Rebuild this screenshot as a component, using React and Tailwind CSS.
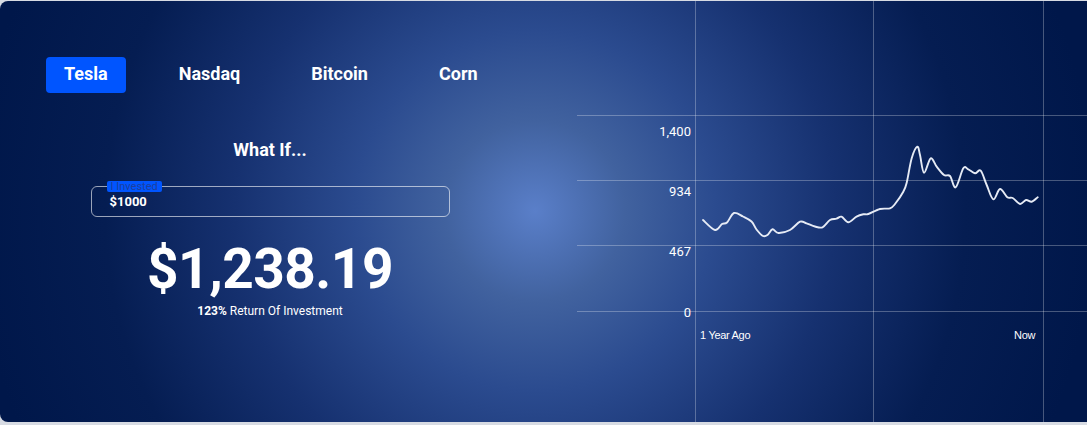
import React from "react";

const PTS = [
  [703, 220], [715, 230], [722, 224], [727, 222.5], [734, 213], [743, 216.5], [751.5, 221.5],
  [756.5, 229.5], [763, 236], [767.5, 235], [772.5, 229.3], [778.5, 233], [790, 230],
  [800, 221.7], [806.5, 223.3], [815, 226.5], [822.5, 227.3], [830, 220], [836.5, 218.7],
  [841.5, 216.7], [848.3, 222.3], [856.5, 216.7], [863.3, 214.3], [868.3, 214], [880, 209],
  [890, 208.3], [895, 204], [903.3, 191.7], [906.7, 182.7], [911.7, 158.3], [917.3, 146.7],
  [920, 155], [924, 172.7], [930.7, 158.3], [936.7, 166.7], [944, 175], [950, 176],
  [955.7, 187.3], [963.3, 168.3], [968.3, 169.3], [975, 173.3], [980.7, 170.7], [986.7, 185],
  [993.3, 199.3], [1000, 189], [1007.3, 197.3], [1012.7, 198], [1020, 204], [1026, 200],
  [1031.7, 201.7], [1037.7, 197.3],
];

function smoothPath(pts) {
  let d = `M ${pts[0][0]} ${pts[0][1]}`;
  for (let i = 0; i < pts.length - 1; i++) {
    const p0 = pts[i - 1] || pts[i];
    const p1 = pts[i];
    const p2 = pts[i + 1];
    const p3 = pts[i + 2] || p2;
    const t = 6;
    const c1x = p1[0] + (p2[0] - p0[0]) / t;
    const c1y = p1[1] + (p2[1] - p0[1]) / t;
    const c2x = p2[0] - (p3[0] - p1[0]) / t;
    const c2y = p2[1] - (p3[1] - p1[1]) / t;
    d += ` C ${c1x.toFixed(2)} ${c1y.toFixed(2)}, ${c2x.toFixed(2)} ${c2y.toFixed(2)}, ${p2[0]} ${p2[1]}`;
  }
  return d;
}

const tabs = ["Tesla", "Nasdaq", "Bitcoin", "Corn"];

export default function App() {
  const d = smoothPath(PTS);
  return (
    <div
      className="w-full h-[425px] bg-[#d7dbe3] pt-px overflow-hidden"
      style={{ fontFamily: "Roboto, 'Liberation Sans', Arial, sans-serif" }}
    >
      <div className="h-[421px] w-full rounded-l-lg overflow-hidden flex bg-[radial-gradient(circle_at_535px_210px,#5a7fc9_0%,#41629f_90px,#2b4b8f_180px,#163170_300px,#051d52_430px,#00174a_560px)] text-white">
        {/* Left column */}
        <div className="w-[577px] shrink-0 flex flex-col">
          <div className="flex gap-[35px] pl-[46px] pt-[56px]">
            {tabs.map((t, i) => (
              <button
                key={t}
                className={
                  "h-9 px-[18px] pb-[3px] rounded-[4px] text-[18px] font-bold leading-none text-white " +
                  (i === 0 ? "bg-[#0055ff]" : "bg-transparent")
                }
              >
                {t}
              </button>
            ))}
          </div>
          <div className="w-[540px] flex flex-col items-center">
            <div className="mt-[46px] text-[18px] leading-[22px] font-bold">What If...</div>
            <div className="relative mt-[25px] w-[359px] h-[31px] border border-white/60 rounded-md">
              <span className="absolute left-[15px] -top-[6px] h-[11px] px-[4px] bg-[#0055ff] rounded-[2px] text-[11px] leading-[11px] text-[#1d3f9e]">
                I Invested
              </span>
              <div className="pl-[18px] pt-[7px] text-[13px] leading-[15px] font-bold">$1000</div>
            </div>
            <div className="mt-[25px] text-[55px] leading-[55px] font-bold tracking-[-0.5px]">
              $1,238.19
            </div>
            <div className="mt-[6px] text-[12px] leading-[16px]">
              <span className="font-bold">123%</span> Return Of Investment
            </div>
          </div>
        </div>
        {/* Chart column */}
        <div className="relative flex-1">
          <svg className="absolute inset-0" width="100%" height="100%">
            <g transform="translate(-577,-1)" stroke="rgba(255,255,255,0.28)" strokeWidth="1">
              <line x1="695.5" y1="0" x2="695.5" y2="425" />
              <line x1="873.5" y1="0" x2="873.5" y2="425" />
              <line x1="1043.5" y1="0" x2="1043.5" y2="425" />
              <line x1="577" y1="115.5" x2="1100" y2="115.5" />
              <line x1="577" y1="180.5" x2="1100" y2="180.5" />
              <line x1="577" y1="245.5" x2="1100" y2="245.5" />
              <line x1="577" y1="311.5" x2="1100" y2="311.5" />
              <path d={d} fill="none" stroke="#e6ebf5" strokeWidth="1.9" strokeLinejoin="round" strokeLinecap="round" />
            </g>
          </svg>
          <div className="absolute left-0 w-[114px] top-[122px] text-right text-[13px] leading-[18px]">1,400</div>
          <div className="absolute left-0 w-[114px] top-[182px] text-right text-[13px] leading-[18px]">934</div>
          <div className="absolute left-0 w-[114px] top-[242px] text-right text-[13px] leading-[18px]">467</div>
          <div className="absolute left-0 w-[114px] top-[303px] text-right text-[13px] leading-[18px]">0</div>
          <div
            className="absolute left-[123px] top-[327px] text-[11px] leading-[14px] tracking-[-0.3px]"
            style={{ fontFamily: "'Liberation Sans', Arial, sans-serif" }}
          >
            1 Year Ago
          </div>
          <div
            className="absolute left-[437px] top-[327px] text-[11px] leading-[14px] tracking-[-0.3px]"
            style={{ fontFamily: "'Liberation Sans', Arial, sans-serif" }}
          >
            Now
          </div>
        </div>
      </div>
    </div>
  );
}
